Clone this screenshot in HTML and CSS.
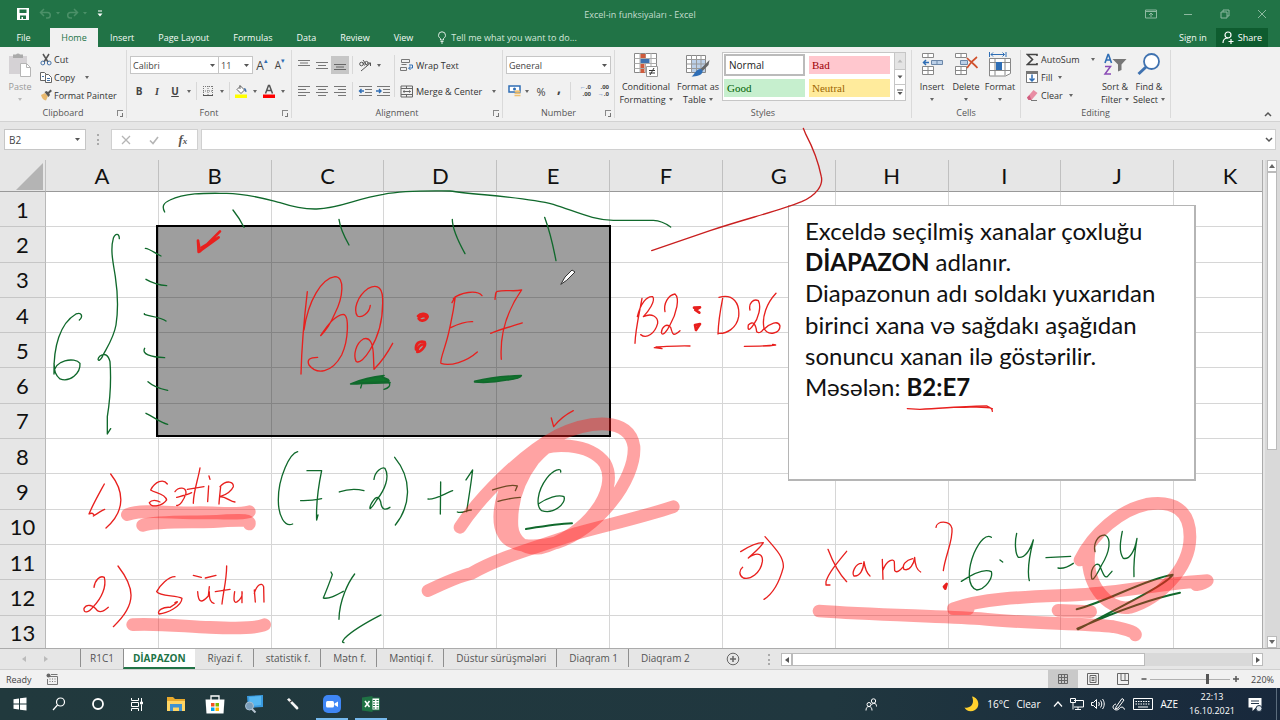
FILE: index.html
```html
<!DOCTYPE html>
<html lang="az">
<head>
<meta charset="utf-8">
<title>Excel-in funksiyaları - Excel</title>
<link rel="stylesheet" href="styles.css">
</head>
<body>
<div class="app">
  <header class="titlebar">
    <div class="quick">
      <button class="qbtn" aria-label="Save"><svg width="14" height="14" viewBox="0 0 14 14"><path d="M1 1h12v12H1z" fill="#fff"/><path d="M3.500 2.500h7v3.500h-7zM4 8.500h6v3.500H7V10H5.500v2H4z" fill="#217346"/></svg></button>
      <button class="qbtn dim" aria-label="Undo"><svg width="22" height="12" viewBox="0 0 22 12"><path d="M5 1L1.500 4.500 5 8M2 4.500h6.500a2.800 2.800 0 010 5.600H7" fill="none" stroke="currentColor" stroke-width="1.500"/><path d="M17 4h4l-2 2.500z" fill="currentColor"/></svg></button>
      <button class="qbtn dim" aria-label="Redo"><svg width="22" height="12" viewBox="0 0 22 12"><path d="M8 1l3.500 3.500L8 8M11 4.500H4.500a2.800 2.800 0 000 5.600H6" fill="none" stroke="currentColor" stroke-width="1.500"/><path d="M17 4h4l-2 2.500z" fill="currentColor"/></svg></button>
      <button class="qbtn" aria-label="Customize"><svg width="6" height="8" viewBox="0 0 6 8"><path d="M1 1h4" stroke="#fff"/><path d="M0.500 3.500h5L3 6.500z" fill="#fff"/></svg></button>
    </div>
    <h1 class="doc-title">Excel-in funksiyaları - Excel</h1>
    <div class="window-btns">
      <button class="wbtn" aria-label="Ribbon options"><svg width="12" height="10" viewBox="0 0 12 10" fill="none" stroke="currentColor"><path d="M.5 1h11v8H.5zM.5 2.500h11M6 8V4.500M4 6l2-2 2 2"/></svg></button>
      <button class="wbtn" aria-label="Minimize"><svg width="10" height="10" viewBox="0 0 10 10" stroke="currentColor"><path d="M1 5.500h8"/></svg></button>
      <button class="wbtn" aria-label="Restore"><svg width="10" height="10" viewBox="0 0 10 10" fill="none" stroke="currentColor"><path d="M1 3h6v6H1zM3 3V1h6v6H7"/></svg></button>
      <button class="wbtn" aria-label="Close"><svg width="10" height="10" viewBox="0 0 10 10" stroke="currentColor"><path d="M1 1l8 8M9 1l-8 8"/></svg></button>
    </div>
  </header>

  <nav class="tabs">
    <button class="tab file">File</button>
    <button class="tab active">Home</button>
    <button class="tab">Insert</button>
    <button class="tab">Page Layout</button>
    <button class="tab">Formulas</button>
    <button class="tab">Data</button>
    <button class="tab">Review</button>
    <button class="tab">View</button>
    <button class="tab tell"><svg width="10" height="13" viewBox="0 0 10 13" fill="none" stroke="#dcebe2"><path d="M3.500 9V7.500C2 6.500 1.500 5.500 1.500 4.300a3.500 3.500 0 017 0C8.500 5.500 8 6.500 6.500 7.500V9zM3.500 10.500h3M4 12h2"/></svg>Tell me what you want to do...</button>
    <span class="grow"></span>
    <button class="tab signin">Sign in</button>
    <button class="tab share"><svg width="12" height="13" viewBox="0 0 12 13" fill="none" stroke="#fff" stroke-width="1.200"><circle cx="6" cy="4" r="3"/><path d="M1 12c0-3 2-5 5-5M9 8v5M6.500 10.500h5"/></svg>Share</button>
  </nav>

  <section class="ribbon">
    <div class="group g-clip">
      <div class="body">
        <button class="big paste"><svg width="24" height="26" viewBox="0 0 24 26"><path d="M1 4h18v18H1z" fill="#d5d2d5"/><path d="M5 2.500h3a2.500 2.500 0 014 0h3V6H5z" fill="#aaa"/><path d="M12.500 11.500h6l4 4v9h-10z" fill="#fff" stroke="#b5b5b5"/><path d="M18.500 11.500v4h4" fill="none" stroke="#b5b5b5"/></svg><span>Paste</span><i class="dd"></i></button>
        <div class="list">
          <button class="cmd"><svg width="12" height="13" viewBox="0 0 12 13" fill="none"><path d="M3 1l5 8M9 1L4 9" stroke="#555" stroke-width="1.500"/><circle cx="2.800" cy="10" r="1.900" stroke="#4472a8"/><circle cx="9.200" cy="10" r="1.900" stroke="#4472a8"/></svg>Cut</button>
          <button class="cmd"><svg width="12" height="12" viewBox="0 0 12 12" fill="#fff" stroke="#666"><path d="M.5 1.500h4l2 2v6h-6z"/><path d="M5.500 3.500h3l3 3v5h-6z"/><path d="M7 7.500h3M7 9.500h3M2 5.500h2" stroke="#4472a8"/></svg>Copy<i class="dd far"></i></button>
          <button class="cmd"><svg width="12" height="12" viewBox="0 0 12 12"><path d="M1 6l4-2 3 3-2 4.500C3.500 11.500 2 9 1 6z" fill="#e9b96e"/><path d="M4.500 3l2-1 1.500 1L10.500.5 12 2 9.300 4.500l.7 1.500-1.500 2z" fill="#555"/></svg>Format Painter</button>
        </div>
      </div>
      <div class="caption">Clipboard<button class="launch" aria-label="Clipboard settings"></button></div>
    </div>

    <div class="group g-font">
      <div class="body rows">
        <div class="row">
          <div class="pair"><select class="sel name" aria-label="Font"><option>Calibri</option></select><select class="sel size" aria-label="Font size"><option>11</option></select></div>
          <button class="ico grow-a" aria-label="Increase font">A<sup>▴</sup></button><button class="ico shrink-a" aria-label="Decrease font">A<sup>▾</sup></button>
        </div>
        <div class="row r2">
          <button class="ico fmt"><b>B</b></button><button class="ico fmt"><em>I</em></button><button class="ico fmt"><u>U</u></button><i class="dd"></i>
          <i class="vr"></i>
          <button class="ico" aria-label="Borders"><svg width="12" height="12" viewBox="0 0 12 12" fill="none" stroke="#777"><path d="M1.500 1v10M6 1v10M10.500 1v10M1 1.500h10M1 6h10" stroke-dasharray="1 1"/><path d="M1 10.500h10" stroke="#555"/></svg></button><i class="dd"></i>
          <i class="vr"></i>
          <button class="ico" aria-label="Fill colour"><svg width="14" height="14" viewBox="0 0 14 14"><path d="M3 5.500L6.500 2l4 4L7 9.500z" fill="#fff" stroke="#666"/><path d="M6 1v4" stroke="#666"/><path d="M10 4c2 0 2.500 2 2.500 4-2 0-2-1.500-2.500-4z" fill="#4472a8"/><path d="M1 10.500h12V14H1z" fill="#ff0"/></svg></button><i class="dd"></i>
          <button class="ico" aria-label="Font colour"><svg width="14" height="14" viewBox="0 0 14 14"><path d="M3.500 9.500L6.500 1.500h1L10.500 9.500M4.700 6.500h4.600" fill="none" stroke="#555" stroke-width="1.500"/><path d="M1 10.500h12V14H1z" fill="#f00"/></svg></button><i class="dd"></i>
        </div>
      </div>
      <div class="caption">Font<button class="launch" aria-label="Font settings"></button></div>
    </div>

    <div class="group g-align">
      <div class="body cols">
        <div class="rows">
          <div class="row">
            <button class="ico w18" aria-label="Top align"><svg width="12" height="12" viewBox="0 0 12 12" stroke="#777"><path d="M0 1.500h12M2 4h8M0 6.500h12"/></svg></button><button class="ico w18" aria-label="Middle align"><svg width="12" height="12" viewBox="0 0 12 12" stroke="#777"><path d="M0 3.500h12M2 6.500h8M0 9.500h12"/></svg></button><button class="ico w18 on" aria-label="Bottom align"><svg width="12" height="12" viewBox="0 0 12 12" stroke="#666"><path d="M0 5.500h12M2 8h8M0 10.500h12"/></svg></button>
            <i class="vr"></i>
            <button class="ico w18" aria-label="Orientation"><svg width="14" height="13" viewBox="0 0 14 13" fill="none" stroke="#555"><circle cx="3.500" cy="5" r="1.800"/><path d="M4.500 3l2 3.500M5 1l4 5.500"/><circle cx="8.500" cy="4" r="1.600"/><path d="M3 12L12.500 4M12.500 7V4h-3"/></svg></button><i class="dd"></i>
          </div>
          <div class="row r2">
            <button class="ico w18" aria-label="Align left"><svg width="12" height="12" viewBox="0 0 12 12" stroke="#777"><path d="M0 1.500h12M0 4.500h8M0 7.500h12M0 10.500h8"/></svg></button><button class="ico w18" aria-label="Centre"><svg width="12" height="12" viewBox="0 0 12 12" stroke="#777"><path d="M0 1.500h12M2 4.500h8M0 7.500h12M2 10.500h8"/></svg></button><button class="ico w18" aria-label="Align right"><svg width="12" height="12" viewBox="0 0 12 12" stroke="#777"><path d="M0 1.500h12M4 4.500h8M0 7.500h12M4 10.500h8"/></svg></button>
            <i class="vr"></i>
            <button class="ico w18" aria-label="Decrease indent"><svg width="14" height="12" viewBox="0 0 14 12" stroke="#777"><path d="M1 1.500h13M7 4.500h7M7 7.500h7M1 10.500h13"/><path d="M6 6H1.500M3.500 4l-2 2 2 2" fill="none" stroke="#2f6eb5" stroke-width="1.400"/></svg></button><button class="ico w18" aria-label="Increase indent"><svg width="14" height="12" viewBox="0 0 14 12" stroke="#777"><path d="M1 1.500h13M7 4.500h7M7 7.500h7M1 10.500h13"/><path d="M0 6h5M3 4l2 2-2 2" fill="none" stroke="#2f6eb5" stroke-width="1.400"/></svg></button>
          </div>
        </div>
        <i class="vr tall"></i>
        <div class="rows">
          <div class="row"><button class="cmd"><svg width="14" height="13" viewBox="0 0 14 13" fill="none" stroke="#777"><path d="M1.500.5h8v3h-8zM1.500 5.500h5M.5 8.500h6v3h-6z"/><path d="M9 6h3.500V9H9M10.500 7.200L8.500 9l2 2" stroke="#2f6eb5"/></svg>Wrap Text</button></div>
          <div class="row r2"><button class="cmd"><svg width="14" height="13" viewBox="0 0 14 13" fill="none" stroke="#666"><path d="M1 1h11.500v11H1zM1 3.500h11.500M1 9.500h11.500M6.500 1v2.500M6.500 9.500V12"/><path d="M3 6.500h7.500M4.500 5.500L3 6.500l1.500 1M9 5.500l1.500 1L9 7.500"/></svg>Merge &amp; Center<i class="dd far"></i></button></div>
        </div>
      </div>
      <div class="caption">Alignment<button class="launch" aria-label="Alignment settings"></button></div>
    </div>

    <div class="group g-num">
      <div class="body rows">
        <div class="row"><select class="sel general" aria-label="Number format"><option>General</option></select></div>
        <div class="row r2">
          <button class="ico" aria-label="Currency"><svg width="14" height="13" viewBox="0 0 14 13"><path d="M1 1h11v6H1z" fill="#fff" stroke="#2f6eb5" stroke-width="1.500"/><circle cx="6.500" cy="4" r="1.500" fill="#2f6eb5"/><ellipse cx="9.500" cy="6.500" rx="3" ry="1.300" fill="#f0c070"/><path d="M6.500 8h6v1.300h-6zM6.500 10h6v1.300h-6z" fill="#f0c070"/></svg></button><i class="dd"></i>
          <button class="ico pct" aria-label="Percent">%</button><button class="ico comma" aria-label="Comma">,</button>
          <i class="vr"></i>
          <button class="ico dec" aria-label="Increase decimal"><span><i>←</i>.0</span><span>.00</span></button><button class="ico dec" aria-label="Decrease decimal"><span>.00</span><span><i>→</i>.0</span></button>
        </div>
      </div>
      <div class="caption">Number<button class="launch" aria-label="Number settings"></button></div>
    </div>

    <div class="group g-style">
      <div class="body cols">
        <button class="big w58"><svg width="24" height="26" viewBox="0 0 24 26"><path d="M.5 1.500h22v19H.5z" fill="#fff" stroke="#888"/><path d="M.5 6.500h22M.5 11.500h22M.5 16.500h22M6 1v20M11.500 1v20M17 1v20" stroke="#aaa"/><path d="M6.500 2h5v4h-5zM6.500 17h4v4h-4z" fill="#cf5b3c"/><path d="M6.500 12h4v4h-4z" fill="#cf5b3c"/><path d="M6.500 7h9v4h-9z" fill="#3f72b0"/><path d="M12.500 14.500h11v10h-11z" fill="#fff" stroke="#999"/><path d="M15 18.500h6M15 21h6M20 16l-4 7" stroke="#333"/></svg><span>Conditional</span><span>Formatting<i class="dd"></i></span></button>
        <button class="big w46"><svg width="24" height="26" viewBox="0 0 24 26"><path d="M.5 3.500h19v17H.5z" fill="#fff" stroke="#888"/><path d="M5 8h14v12H5z" fill="#bcd0e8"/><path d="M.5 7.500h19M.5 12h19M.5 16.500h19M5.500 3v18M10.500 3v18M15 3v18" stroke="#999"/><path d="M23.500 8l-1 5-6 6-2-2z" fill="#666"/><path d="M14 17c2 0 3 1.500 2.500 3-1 3.500-6 4.500-11 4.500 3-1.500 4-7 8.500-7.500z" fill="#2f6eb5"/></svg><span>Format as</span><span>Table<i class="dd"></i></span></button>
        <div class="gallery">
          <div class="swatches">
            <button class="st normal">Normal</button><button class="st bad">Bad</button>
            <button class="st good">Good</button><button class="st neutral">Neutral</button>
          </div>
          <div class="gal-btns"><button aria-label="Up" class="off"><svg width="6" height="4" viewBox="0 0 6 4"><path d="M.5 3.500h5L3 .5z" fill="#bbb"/></svg></button><button aria-label="Down"><svg width="6" height="4" viewBox="0 0 6 4"><path d="M.5.5h5L3 3.500z" fill="#555"/></svg></button><button aria-label="More"><svg width="6" height="7" viewBox="0 0 6 7"><path d="M0 1h6" stroke="#555"/><path d="M.5 3h5L3 6z" fill="#555"/></svg></button></div>
        </div>
      </div>
      <div class="caption">Styles</div>
    </div>

    <div class="group g-cells">
      <div class="body cols">
        <button class="big w34"><svg width="24" height="26" viewBox="0 0 24 26" fill="#fff" stroke="#888"><path d="M2.500 1.500h11v4h-11zM8 1.500v4M2.500 14.500h11v8h-11zM8 14.500v8M2.500 18.500h11"/><path d="M11.500 8.500h11v4h-11zM17 8.500v4" fill="#bcd0e8" stroke="#6b87a8"/><path d="M9 10.500H3.500M6 8l-2.500 2.500L6 13" fill="none" stroke="#2f6eb5" stroke-width="1.500"/></svg><span>Insert</span><i class="dd"></i></button>
        <button class="big w34"><svg width="24" height="26" viewBox="0 0 24 26" fill="#fff" stroke="#888"><path d="M1.500 1.500h11v4h-11zM7 1.500v4M1.500 14.500h11v8h-11zM7 14.500v8M1.500 18.500h11"/><path d="M6.500 8.500h7v4h-7z" fill="#bcd0e8" stroke="#6b87a8"/><path d="M13 6c4 4 7 6 10.500 10M23 5c-4 3-7 6-10 11" fill="none" stroke="#d0502c" stroke-width="1.700"/></svg><span>Delete</span><i class="dd"></i></button>
        <button class="big w34"><svg width="24" height="26" viewBox="0 0 24 26" fill="#fff" stroke="#888"><path d="M1.500 6.500h21v15l-5 2.500H1.500z"/><path d="M1.500 10.500h21M1.500 18.500h21M7 6.500v17M17 6.500v17"/><path d="M8 10h6v8H8z" fill="#2f6eb5" stroke="none"/><path d="M1.500 0v5M18 0v5M3 2.500h13.500M5 .5l-2 2 2 2M14.500.5l2 2-2 2" fill="none" stroke="#2f6eb5"/></svg><span>Format</span><i class="dd"></i></button>
      </div>
      <div class="caption">Cells</div>
    </div>

    <div class="group g-edit">
      <div class="body cols">
        <div class="list edit">
          <button class="cmd"><svg width="12" height="13" viewBox="0 0 12 13" fill="none" stroke="#444" stroke-width="1.600"><path d="M11 3V1.500H1.500L6.500 6.500l-5 5H11V10"/></svg>AutoSum<i class="dd far"></i></button>
          <button class="cmd"><svg width="12" height="12" viewBox="0 0 12 12" fill="#fff"><path d="M.5 1.500h11v10H.5z" stroke="#777"/><path d="M0 0h12v3H0z" fill="#777"/><path d="M6 3.500V10M3.500 7.500L6 10l2.500-2.500" fill="none" stroke="#2f6eb5" stroke-width="1.500"/></svg>Fill<i class="dd"></i></button>
          <button class="cmd"><svg width="12" height="12" viewBox="0 0 12 12"><path d="M1 8.500L7.500 1l4 3-6 7H2.500z" fill="#e88da4"/><path d="M1 8.500l1.500 2.500h3L3.500 6z" fill="#d05f80"/><path d="M5 11.500h6" stroke="#777"/></svg>Clear<i class="dd"></i></button>
        </div>
        <button class="big w34"><svg width="24" height="26" viewBox="0 0 24 26" fill="none"><path d="M2 11L5 2.500h.5L8.500 11M3 8h4.500" stroke="#2f6eb5" stroke-width="1.600"/><path d="M2 14.500h5.500L2 22h6" stroke="#8a4bb5" stroke-width="1.500"/><path d="M9.500 7h14l-5 5.500V18l-3.500 1.500v-7z" fill="#777"/></svg><span>Sort &amp;</span><span>Filter<i class="dd"></i></span></button>
        <button class="big w34"><svg width="24" height="26" viewBox="0 0 24 26" fill="none"><circle cx="14.500" cy="9.500" r="7.500" fill="#fff" stroke="#3f72b0" stroke-width="1.800"/><path d="M9 15L1.500 22" stroke="#3f72b0" stroke-width="3"/></svg><span>Find &amp;</span><span>Select<i class="dd"></i></span></button>
      </div>
      <div class="caption">Editing</div>
    </div>
    <button class="collapse" aria-label="Collapse ribbon"><svg width="8" height="6" viewBox="0 0 8 6" fill="none" stroke="#555" stroke-width="1.500"><path d="M1 5l3-3 3 3"/></svg></button>
  </section>

  <section class="formula">
    <select class="sel cellname" aria-label="Name box"><option>B2</option></select>
    <i class="dots"></i>
    <div class="fx">
      <button aria-label="Cancel"><svg width="10" height="10" viewBox="0 0 10 10" stroke="#b5b5b5" stroke-width="1.300"><path d="M1 1l8 8M9 1L1 9"/></svg></button>
      <button aria-label="Enter"><svg width="10" height="10" viewBox="0 0 10 10" fill="none" stroke="#b5b5b5" stroke-width="1.600"><path d="M1 5.500L4 8.500 9 2"/></svg></button>
      <button class="fxb" aria-label="Insert function"><em>f<small>x</small></em></button>
    </div>
    <div class="fbox"><input type="text" aria-label="Formula"><svg width="8" height="6" viewBox="0 0 8 6" fill="none" stroke="#555" stroke-width="1.500"><path d="M1 1l3 3 3-3"/></svg></div>
  </section>

  <main class="sheet">
    <div class="grid-wrap">
      <table class="cells">
        <thead><tr><th class="corner"><svg width="27" height="27" viewBox="0 0 27 27"><path d="M27 0v27H0z" fill="#b4b4b4"/></svg></th><th>A</th><th>B</th><th>C</th><th>D</th><th>E</th><th>F</th><th>G</th><th>H</th><th>I</th><th>J</th><th>K</th></tr></thead>
        <tbody>
          <tr><th>1</th><td></td><td></td><td></td><td></td><td></td><td></td><td></td><td></td><td></td><td></td><td></td></tr>
          <tr><th>2</th><td></td><td></td><td></td><td></td><td></td><td></td><td></td><td></td><td></td><td></td><td></td></tr>
          <tr><th>3</th><td></td><td></td><td></td><td></td><td></td><td></td><td></td><td></td><td></td><td></td><td></td></tr>
          <tr><th>4</th><td></td><td></td><td></td><td></td><td></td><td></td><td></td><td></td><td></td><td></td><td></td></tr>
          <tr><th>5</th><td></td><td></td><td></td><td></td><td></td><td></td><td></td><td></td><td></td><td></td><td></td></tr>
          <tr><th>6</th><td></td><td></td><td></td><td></td><td></td><td></td><td></td><td></td><td></td><td></td><td></td></tr>
          <tr><th>7</th><td></td><td></td><td></td><td></td><td></td><td></td><td></td><td></td><td></td><td></td><td></td></tr>
          <tr><th>8</th><td></td><td></td><td></td><td></td><td></td><td></td><td></td><td></td><td></td><td></td><td></td></tr>
          <tr><th>9</th><td></td><td></td><td></td><td></td><td></td><td></td><td></td><td></td><td></td><td></td><td></td></tr>
          <tr><th>10</th><td></td><td></td><td></td><td></td><td></td><td></td><td></td><td></td><td></td><td></td><td></td></tr>
          <tr><th>11</th><td></td><td></td><td></td><td></td><td></td><td></td><td></td><td></td><td></td><td></td><td></td></tr>
          <tr><th>12</th><td></td><td></td><td></td><td></td><td></td><td></td><td></td><td></td><td></td><td></td><td></td></tr>
          <tr><th>13</th><td></td><td></td><td></td><td></td><td></td><td></td><td></td><td></td><td></td><td></td><td></td></tr>
        </tbody>
      </table>
      <div class="selection"></div>
      <div class="note">
        <p>Exceldə seçilmiş xanalar çoxluğu<br><b>DİAPAZON</b> adlanır.</p>
        <p>Diapazonun adı soldakı yuxarıdan<br>birinci xana və sağdakı aşağıdan<br>sonuncu xanan ilə göstərilir.</p>
        <p>Məsələn: <b>B2:E7</b></p>
      </div>
    </div>
    <div class="vscroll">
      <button aria-label="Scroll up"><svg width="6" height="4" viewBox="0 0 6 4"><path d="M0 4h6L3 0z" fill="#666"/></svg></button>
      <div class="vthumb"></div>
      <span class="grow"></span>
      <button aria-label="Scroll down"><svg width="6" height="4" viewBox="0 0 6 4"><path d="M0 0h6L3 4z" fill="#666"/></svg></button>
    </div>
  </main>

  <section class="sheettabs">
    <div class="navs"><button aria-label="Previous sheet"><svg width="4" height="6" viewBox="0 0 4 6"><path d="M4 0v6L0 3z" fill="#bbb"/></svg></button><button aria-label="Next sheet"><svg width="4" height="6" viewBox="0 0 4 6"><path d="M0 0v6l4-3z" fill="#bbb"/></svg></button></div>
    <button class="stab first">R1C1</button><button class="stab cur">DİAPAZON</button><button class="stab">Riyazi f.</button><button class="stab">statistik f.</button><button class="stab">Mətn f.</button><button class="stab">Məntiqi f.</button><button class="stab">Düstur sürüşmələri</button><button class="stab">Diaqram 1</button><button class="stab">Diaqram 2</button>
    <button class="add" aria-label="New sheet"><svg width="14" height="14" viewBox="0 0 14 14" fill="none" stroke="#666"><circle cx="7" cy="7" r="5.800"/><path d="M7 4v6M4 7h6" stroke-width="1.500"/></svg></button>
    <span class="grow"></span>
    <div class="hzone"><i class="dots"></i>
      <div class="hscroll"><button aria-label="Scroll left"><svg width="4" height="6" viewBox="0 0 4 6"><path d="M4 0v6L0 3z" fill="#555"/></svg></button><div class="hthumb"></div><button aria-label="Scroll right"><svg width="4" height="6" viewBox="0 0 4 6"><path d="M0 0v6l4-3z" fill="#555"/></svg></button></div>
    </div>
  </section>

  <section class="status">
    <span class="ready">Ready</span>
    <svg width="12" height="12" viewBox="0 0 12 12" fill="none" stroke="#777"><path d="M4 3.500h7.500v8H1.500V6M3.500 6h1M6 6h1M8.500 6h1M3.500 8.500h1M6 8.500h1M8.500 8.500h1M5 1.500h6.500"/><circle cx="2.500" cy="2.500" r="2" fill="#666" stroke="none"/></svg>
    <span class="grow"></span>
    <button class="view on" aria-label="Normal view"><svg width="12" height="12" viewBox="0 0 12 12" fill="none" stroke="#666"><path d="M1.500 1.500h9v9h-9zM4.500 1.500v9M7.500 1.500v9M1.500 4.500h9M1.500 7.500h9"/></svg></button><button class="view" aria-label="Page layout view"><svg width="12" height="12" viewBox="0 0 12 12" fill="none" stroke="#666"><path d="M.5.5h11v11H.5zM3 2.500h6v7H3zM4.500 4.500h3M4.500 6h3M4.500 7.500h3"/></svg></button><button class="view" aria-label="Page break view"><svg width="12" height="12" viewBox="0 0 12 12" fill="none" stroke="#666"><path d="M.5.5h11v11H.5zM4 .5v7M8 .5v7M4 7.500h7.500"/></svg></button>
    <button class="zb" aria-label="Zoom out"><svg width="6" height="6" viewBox="0 0 6 6"><path d="M.5 3h5" stroke="#555" stroke-width="1.500"/></svg></button><input class="zoom" type="range" min="0" max="100" value="72" aria-label="Zoom"><button class="zb" aria-label="Zoom in"><svg width="6" height="6" viewBox="0 0 6 6"><path d="M0 3h6M3 0v6" stroke="#555" stroke-width="1.500"/></svg></button>
    <span class="pc">220%</span>
  </section>

  <footer class="taskbar">
    <button class="tk" aria-label="Start"><svg width="14" height="14" viewBox="0 0 14 14" fill="#fff"><path d="M.5 2.300L6 1.500v5H.5zM7 1.300L13.500.5v6H7zM.5 7.500H6v5l-5.500-.8zM7 7.500h6.500v6L7 12.700z"/></svg></button>
    <button class="tk" aria-label="Search"><svg width="14" height="14" viewBox="0 0 14 14" fill="none" stroke="#fff" stroke-width="1.200"><circle cx="8.500" cy="5" r="4"/><path d="M5.500 8L1 13"/></svg></button>
    <button class="tk" aria-label="Cortana"><svg width="14" height="14" viewBox="0 0 14 14" fill="none" stroke="#fff" stroke-width="1.800"><circle cx="7" cy="7" r="5"/></svg></button>
    <button class="tk" aria-label="Task view"><svg width="14" height="14" viewBox="0 0 14 14" fill="none" stroke="#fff"><path d="M1.500 1v2.500h7V1M1.500 5.500h7v4h-7zM1.500 14v-2.500h7V14M11.500 1v4M11.500 7.500V14"/><path d="M10.500 5h2v2h-2z" fill="#fff"/></svg></button>
    <button class="tk" aria-label="Explorer"><svg width="18" height="16" viewBox="0 0 18 16"><path d="M0 1h6l2 2h10v12H0z" fill="#e8a92c"/><path d="M0 5h18v10H0z" fill="#ffd564"/><path d="M3 8h12v7h-3v-3.500H6V15H3z" fill="#3f92d2"/></svg></button>
    <button class="tk" aria-label="Store"><svg width="20" height="20" viewBox="0 0 20 20"><path d="M6 6V2h8v4" fill="none" stroke="#fff" stroke-width="1.300"/><path d="M.5 5.500h19l-1 14h-17z" fill="#fff"/><path d="M6 9h3.500v3.500H6z" fill="#f25022"/><path d="M10.500 9H14v3.500h-3.500z" fill="#7fba00"/><path d="M6 13.500h3.500V17H6z" fill="#00a4ef"/><path d="M10.500 13.500H14V17h-3.500z" fill="#ffb900"/></svg></button>
    <button class="tk" aria-label="Screen tool"><svg width="20" height="18" viewBox="0 0 20 18"><path d="M3 1l16-1v12L4 13z" fill="#3a9be0"/><path d="M5 2l12-1v9L6 11z" fill="#56b8f2"/><circle cx="5.500" cy="11" r="4" fill="#7b9db8" stroke="#a8bfd0"/><path d="M8 14l3.500 3.500" stroke="#b8c6d2" stroke-width="2"/></svg></button>
    <button class="tk" aria-label="Pen"><svg width="14" height="14" viewBox="0 0 14 14"><path d="M1 2.500L3 1l9 9c1 1.500 0 3-1.500 2.500z" fill="#f4f4f4"/><path d="M3.500 5.500L6 3.500" stroke="#333" stroke-width="1.200"/></svg></button>
    <button class="tk open" aria-label="Zoom"><svg width="18" height="18" viewBox="0 0 18 18"><rect width="18" height="18" rx="5" fill="#3f86f5"/><rect x="3" y="6" width="8" height="6.500" rx="1.500" fill="#fff"/><path d="M11.500 8.500L15 6.500v5.500l-3.500-2z" fill="#fff"/></svg></button>
    <button class="tk open" aria-label="Excel"><svg width="18" height="16" viewBox="0 0 18 16"><path d="M9 2h8.500v12H9z" fill="#fff" stroke="#217346"/><path d="M11 4.500h2M14.500 4.500h2M11 7h2M14.500 7h2M11 9.500h2M14.500 9.500h2M11 12h2M14.500 12h2" stroke="#217346"/><path d="M0 1.500L10.500 0v16L0 14.500z" fill="#1f7244"/><path d="M3 5l4.500 6M7.500 5L3 11" stroke="#fff" stroke-width="1.500"/></svg></button>
    <span class="grow"></span>
    <div class="people"><svg width="12" height="13" viewBox="0 0 12 13" fill="none" stroke="#fff"><circle cx="8.500" cy="3" r="2.200"/><circle cx="4" cy="6.500" r="2"/><path d="M1 12.500C1 10 2 8.500 4 8.500s3 1.500 3 4M6.500 7C7 5.700 8 5.300 9 5.300c1.700 0 2.500 1.200 2.500 3.200"/></svg></div>
    <div class="weather"><svg width="16" height="16" viewBox="0 0 16 16"><path d="M8 0.500c7 1 8.500 10.500 3 13.500-4 2.500-9 1-10.500-2.500C7 13 11 7 8 .5z" fill="#ffd02e"/></svg><span>16°C</span><span>Clear</span></div>
    <div class="tray">
      <svg width="10" height="8" viewBox="0 0 10 8" fill="none" stroke="#fff" stroke-width="1.200"><path d="M1 6.500L5 2l4 4.500"/></svg>
      <svg width="14" height="12" viewBox="0 0 14 12" fill="none" stroke="#fff"><path d="M4 2.500h9.500v6.500H4M5 11.500h6M8 9v2.500M.5.500h5v4h-5zM3 4.500v7"/></svg>
      <svg width="14" height="12" viewBox="0 0 14 12" fill="none" stroke="#fff"><path d="M.5 4.500h2l3-3v9l-3-3h-2zM7.500 4c1 1 1 3 0 4M9.500 2.500c1.700 2 1.700 5 0 7M11.500 1c2.300 3 2.300 7 0 10"/></svg>
      <svg width="14" height="14" viewBox="0 0 14 14" fill="none" stroke="#fff"><path d="M4 10L10 1.500l2 1.500-6 8-2.500 1zM4 7C0 8 0 12 4 13c3 .5 3.500-3 6-3s1 3 3 2"/></svg>
      <svg width="20" height="12" viewBox="0 0 20 12" fill="none" stroke="#fff"><path d="M.5.5h19v11H.5z"/><path d="M2.500 3.500h15M2.500 6h15" stroke-dasharray="1.500 1"/><path d="M5 9h10"/></svg>
      <span>AZE</span>
    </div>
    <div class="clock"><time>22:13</time><time>16.10.2021</time></div>
    <button class="notif" aria-label="Notifications"><svg width="14" height="15" viewBox="0 0 14 15"><path d="M.5 1h13v9.500H8L4.500 14v-3.500h-4z" fill="#fff"/><path d="M3 4h8M3 6.500h8" stroke="#24364a"/><circle cx="11" cy="11.500" r="3" fill="#dce3ea" stroke="#24364a"/></svg></button>
    <i class="peek"></i>
  </footer>

  <svg class="ink" width="1280" height="720" viewBox="0 0 1280 720" aria-hidden="true">
    <g class="pen-red">
      <g transform="translate(0 160) scale(.3333)">
        <path class="fat" d="M660 214L600 274L594 242L596 276L656 232L606 262"/>
      </g>
      <g transform="translate(290 180) scale(.3333)">
        <path d="M52 335C42 420 35 500 33 582M42 450C55 360 95 296 135 290C165 290 160 350 135 400C120 435 105 455 92 467C115 430 140 405 160 403C178 405 176 480 155 525C125 580 80 585 57 555C50 540 58 532 83 532"/>
        <path d="M241 376C238 400 215 415 202 408C190 390 200 350 235 325C265 310 280 325 278 370C278 430 262 475 240 510C225 535 208 552 198 544C190 525 197 490 220 477C240 470 248 490 250 520L252 568C272 548 292 520 308 490"/>
        <path class="fat" d="M384 408C392 398 412 400 413 410C408 422 392 426 386 416C392 408 404 406 408 411M378 508C376 490 388 482 404 486C410 498 392 516 382 516C382 502 392 494 400 492"/>
        <path d="M486 368L496 350C490 400 482 430 478 450C468 500 448 540 453 550C480 560 530 545 562 516M490 356C510 338 560 328 576 347M482 443C505 432 525 424 548 425M615 358C617 340 617 335 622 334C650 328 670 336 695 330C660 380 628 450 634 538M602 460C635 445 665 440 697 429"/>
        <path d="M784 714L791 740C805 722 825 705 850 692"/>
      </g>
      <g transform="translate(620 130) scale(.3333)">
        <path class="dark" d="M550 -5L558 14C585 65 597 105 604 140C610 165 590 195 545 215C470 245 380 265 270 302L95 362"/>
        <path d="M66 505C58 550 46 600 45 640M52 560C62 520 80 498 98 500C108 512 85 545 70 560C95 548 115 560 113 580C105 610 80 628 62 614M135 545C130 520 145 495 165 492C180 505 170 550 150 585C140 605 128 620 124 608C126 590 140 578 152 592C158 615 160 620 180 602"/>
        <path class="fat" d="M222 533L240 532L226 540L238 548M225 585L240 582L228 600Z"/>
        <path d="M308 505C300 545 295 580 294 612M297 502C340 490 360 520 356 560C350 595 320 612 294 610M390 540C385 520 400 505 415 512C425 530 415 565 400 585C390 600 382 605 385 585C400 570 408 585 410 605C418 612 425 605 430 598M468 490C440 520 425 560 432 595C445 620 480 610 480 588C475 570 450 580 432 598"/>
        <path d="M103 653L126 656L108 651C140 650 180 646 210 648M373 649C410 649 440 649 467 645L458 643"/>
        <path d="M862 836L900 838C980 834 1050 828 1100 828C1115 834 1118 838 1117 844M1117 836C1100 828 1060 832 1020 832"/>
      </g>
      <g transform="translate(60 440) scale(.3333)">
        <path d="M133 132C115 165 98 195 87 222C100 215 105 228 100 228C115 218 125 212 134 208M152 102C190 150 200 210 138 264"/>
        <path d="M322 132C310 115 285 125 272 150C285 160 315 160 320 180C308 198 275 205 268 188C275 178 290 180 300 186M345 155C355 140 380 140 378 160C372 180 358 200 350 196M350 172C365 168 380 165 395 158M420 84C414 120 400 155 400 190M382 148L432 140M446 138L443 185M450 118L447 108M482 140C480 160 478 175 477 192M480 140C500 118 522 125 520 140C512 158 495 165 480 170C500 170 510 185 525 186"/>
        <path d="M102 442C105 420 120 405 133 412C140 440 125 475 100 500C85 520 70 520 72 505C80 490 100 495 112 512C125 520 135 510 145 502M174 378C222 440 235 490 160 560"/>
        <path d="M345 410C325 410 300 435 290 455C300 470 350 465 366 475C365 500 320 520 297 522C290 512 310 500 330 502C350 490 360 480 345 488M413 455C415 490 425 490 445 468L448 440M448 455C448 480 452 488 462 490M400 406L424 412M436 414L468 406M500 378C500 420 490 455 486 492M466 455L510 448M524 455C520 480 522 492 532 485C545 475 548 465 546 455L546 488M583 450L586 486M583 460C590 435 605 425 611 440L612 486"/>
      </g>
      <g transform="translate(720 480) scale(.3333)">
        <path d="M62 215C85 200 110 188 130 188C120 205 100 220 85 234C110 215 130 220 127 245C122 280 90 300 70 294C55 285 58 270 68 262M135 170C175 215 192 235 190 262C180 300 160 340 132 358"/>
        <path d="M324 208C340 250 360 285 380 305M380 214C350 250 325 280 318 305L318 315L330 315M425 250C405 250 395 280 402 288C420 290 430 270 432 245C435 265 440 280 450 288M487 238L489 298M489 270C500 240 520 235 523 245L524 272C530 280 540 272 550 260M578 236C558 240 545 255 552 268C570 275 582 250 584 232C585 255 590 270 602 276M648 142C650 122 690 120 696 145C700 180 675 230 670 272"/>
        <path class="fat" d="M672 320L680 312L676 326Z"/>
      </g>
    </g>

    <g class="pen-green">
      <g transform="translate(290 180) scale(.3333)">
        <path d="M-376 96C-386 78 -378 68 -360 60C-310 36 -240 40 -190 40C-130 40 -70 58 -30 68C0 78 40 88 80 87C150 85 200 55 280 43C350 30 430 33 480 33C560 45 700 50 790 73C860 95 910 121 970 121H1090C1115 122 1130 132 1142 141"/>
        <path d="M147 118C150 140 160 165 177 195M487 118C487 145 505 185 525 221M764 112C778 150 790 200 798 242"/>
        <path class="blob" d="M182 612C215 598 250 590 282 587C270 595 295 594 297 602C280 610 220 606 190 612C230 612 270 606 300 608Z"/>
        <path d="M297 606C303 618 295 625 282 628M212 624L215 614"/>
        <path class="blob" d="M554 604C585 596 640 588 694 587C690 596 670 598 650 600C620 606 580 608 554 606Z"/>
      </g>
      <g transform="translate(0 160) scale(.3333)">
        <path d="M699 150C712 166 722 182 732 202M436 265C450 266 465 280 483 288M438 358C455 368 475 375 500 377M433 461C430 468 480 468 498 483M434 565C425 582 450 592 494 593M444 665C455 675 480 686 503 691M438 760C460 770 480 788 503 793"/>
        <path d="M358 236C358 218 345 220 340 235C330 270 340 310 346 350C355 410 355 450 348 495C340 540 315 570 305 594C295 608 290 598 300 588C315 578 325 585 330 605C334 660 330 720 322 770L322 822L332 806"/>
        <path d="M238 480C250 470 245 455 228 462C180 490 160 560 162 642C160 600 225 590 240 610C242 640 210 668 180 657C160 640 165 625 162 610"/>
      </g>
      <g transform="translate(60 440) scale(.3333)">
        <path d="M713 35C690 40 655 110 655 180C655 230 675 262 698 252M741 92L785 92C775 140 768 190 770 240L774 225M722 182C745 180 765 182 785 176M838 156C860 148 885 145 912 152M942 118C945 95 965 80 975 85C990 110 975 150 950 180C935 205 925 215 932 195C945 170 955 165 962 185C965 210 975 212 990 202"/>
        <path d="M813 396L817 404C808 430 800 450 790 474C810 478 830 465 850 454M884 402C866 425 838 480 837 538M852 608C843 608 850 600 855 594C885 565 930 542 963 525"/>
      </g>
      <g transform="translate(390 400) scale(.3333)">
        <path d="M14 172C70 240 60 320 16 375M152 246L151 342M114 297C135 300 165 280 188 272M228 240L248 210C242 260 235 300 230 335M202 336C215 342 230 330 244 330M308 270C330 262 360 252 382 258L376 272M324 304C350 298 370 292 391 292"/>
        <path d="M512 216C515 202 490 208 470 235C440 275 438 320 455 332C490 345 530 310 522 290C505 282 470 295 445 312"/>
        <path class="mid" d="M408 387C440 382 500 372 546 370"/>
      </g>
      <g transform="translate(980 470) scale(.3333)">
        <path d="M34 202C20 192 0 210 -18 250C-38 300 -38 350 -10 360C15 358 40 325 34 305C15 295 -20 310 -56 334M60 270L68 276M110 190C104 215 105 250 115 262C135 265 150 240 160 210C150 250 140 300 148 332M198 263L272 259M234 294C250 298 268 288 280 280"/>
        <path d="M345 245C340 225 350 195 375 195C395 205 390 245 365 285C350 315 338 335 335 325C330 300 345 275 358 285C368 305 372 325 382 320L396 304M427 184C422 210 415 245 430 265C450 270 465 240 471 205C465 240 460 280 462 320"/>
        <path class="mid" d="M290 418C380 395 500 325 578 314C560 345 400 420 294 478M292 476C340 455 470 395 600 368"/>
      </g>
    </g>

    <g class="marker">
      <g transform="translate(60 440) scale(.3333)">
        <path d="M202 224C250 205 350 222 420 218C480 218 540 224 568 215"/>
        <path d="M248 256C300 240 430 250 500 242C550 240 570 240 568 252"/>
        <path d="M218 554C300 550 380 560 450 562C530 566 590 566 614 554"/>
      </g>
      <g transform="translate(390 400) scale(.3333)">
        <path d="M210 382C270 290 400 160 500 108C600 60 720 50 732 140C738 240 620 390 500 428C430 446 360 440 340 400C310 350 345 220 420 165C480 120 600 130 645 190C690 270 590 410 450 444C400 450 370 420 366 380C362 310 385 240 430 180C460 145 480 130 502 130"/>
        <path d="M114 572C170 545 210 528 245 520C330 470 450 440 560 400C670 370 760 350 850 320"/>
      </g>
      <g transform="translate(720 480) scale(.3333)">
        <path d="M297 393C450 404 650 408 780 416C900 430 1100 430 1180 440C1230 450 1250 460 1246 465"/>
        <path d="M745 386H700C800 350 960 350 1080 344C1220 335 1330 310 1462 302C1450 312 1440 312 1428 314"/>
      </g>
      <g transform="translate(980 470) scale(.3333)">
        <path d="M300 270C340 190 420 120 500 103C580 90 630 120 630 200C630 300 530 390 450 412C380 425 310 330 328 240"/>
        <path d="M234 421L332 425"/>
      </g>
    </g>
    <path d="M561 284L565 277L572 270L575 272L567 280Z" fill="#fff" stroke="#333" stroke-width="1"/>
  </svg>
</div>
</body>
</html>
```

FILE: styles.css
```css
* { box-sizing: border-box; }
body { margin: 0; font-family: "Open Sans", "Noto Sans", sans-serif; font-size: 10px; color: #444; }
button, select, input { font: inherit; color: inherit; margin: 0; }
button { border: 0; padding: 0; background: none; display: inline-flex; align-items: center; justify-content: center; white-space: nowrap; }
svg { display: block; flex: none; }
i { font-style: normal; }
.app { position: relative; display: flex; flex-direction: column; height: 100vh; min-height: 480px; overflow: hidden; background: #e6e6e6; }
.grow { flex: 1; }
.dd { flex: none; width: 0; height: 0; border: 2px solid transparent; border-top: 3px solid #666; border-bottom: 0; margin-left: 3px; }
.dd.far { margin-left: 8px; }
.vr { width: 1px; height: 18px; background: #d8d8d8; flex: none; }
.vr.tall { height: 42px; margin-top: 5px; }
.dots { width: 1px; height: 11px; border-left: 2px dotted #aaa; flex: none; }

.titlebar { display: grid; grid-template-columns: 1fr auto 1fr; height: 28px; background: #217346; align-items: center; color: #fff; flex: none; }
.quick { display: flex; align-items: center; gap: 5px; padding-left: 16px; height: 24px; }
.qbtn { min-width: 14px; }
.quick .qbtn:nth-child(2) { margin-left: 4px; }
.dim { color: #4b9068; }
.doc-title { margin: 0; font-size: 9px; font-weight: 400; color: #c4ddcf; }
.window-btns { display: flex; justify-content: flex-end; height: 24px; color: #8db9a0; }
.wbtn { width: 37px; }

.tabs { display: flex; height: 19px; background: #217346; color: #f4faf6; flex: none; font-size: 9px; padding-right: 12px; }
.tab { padding: 0 12px; }
.tab.file { width: 47px; margin-right: 3px; }
.tab.active { background: #f1f1f1; color: #217346; width: 48px; }
.tab.tell { gap: 4px; color: #d4e8dc; }
.tab.share { background: #0e5c2f; gap: 4px; padding: 0 6px; color: #fff; }
.tab.signin { padding: 0 9px; }

.ribbon { position: relative; display: flex; height: 75px; background: #f1f1f1; border-bottom: 1px solid #d2d2d2; font-size: 9px; flex: none; }
.group { position: relative; display: flex; flex-direction: column; border-right: 1px solid #dadada; margin: 3px 0; flex: none; }
.group .body { flex: 1; display: flex; align-items: flex-start; }
.caption { position: relative; height: 10px; line-height: 10px; text-align: center; color: #555; }
.launch { position: absolute; right: 3px; top: 2px; width: 6px; height: 6px; border: 1px solid #888; border-right: 0; border-bottom: 0; }
.launch::after { content: ""; width: 3px; height: 3px; margin: 2px 0 0 2px; border: 1px solid #777; border-top: 0; border-left: 0; }
.g-clip { width: 127px; } .g-font { width: 165px; } .g-align { width: 211px; } .g-num { width: 112px; }
.g-style { width: 297px; } .g-cells { width: 109px; } .g-edit { width: 150px; }
.body.rows, .rows { display: flex; flex-direction: column; align-items: stretch; gap: 5px; }
.row { display: flex; align-items: center; height: 20px; }
.g-font .row, .g-num .row, .g-align .row { margin-top: 1px; }
.group .rows { padding: 4px 0 0 3px; }
.g-align .body { gap: 2px; }
.list { display: flex; flex-direction: column; align-items: flex-start; }
.cmd { height: 18px; gap: 2px; color: #333; }
.big { flex-direction: column; justify-content: flex-start; padding-top: 2px; line-height: 13px; color: #333; }
.big span { display: flex; align-items: center; }
.big > .dd { margin: 5px 0 0; }
.big > svg { margin-bottom: 2px; }
.paste { width: 40px; color: #999; }
.paste .dd { border-top-color: #bbb; }
.w58 { width: 58px; margin-left: 2px; } .w46 { width: 46px; } .w34 { width: 34px; }
.sel { appearance: none; border: 1px solid #c6c6c6; background: #fff url("data:image/svg+xml,%3Csvg xmlns='http://www.w3.org/2000/svg' width='5' height='3'%3E%3Cpath d='M0 0h5L2.500 3z' fill='%23555'/%3E%3C/svg%3E") no-repeat right 3px center / 5px 3px; height: 18px; padding: 0 2px; border-radius: 0; }
.pair { display: flex; }
.sel.name { width: 89px; } .sel.size { width: 35px; margin-left: -1px; }
.ico { min-width: 18px; height: 18px; }
.w18 { width: 18px; }
.ico.on { background: #c6c6c6; }
.grow-a { font-size: 12px; } .shrink-a { font-size: 10px; }
.ico sup { font-size: 7px; color: #2f6eb5; align-self: flex-start; }
.fmt { font-size: 10px; }
.fmt em { font-family: "Liberation Serif", serif; font-weight: 700; }
.fmt u { font-weight: 700; }
.r2 > .dd { margin: 0 3px; }
.r2 > .vr { margin: 0 2px; }
.g-align .vr { margin-left: 3px; margin-right: 3px; }
.g-align .vr.tall { margin: 5px 0 0; }
.sel.general { width: 105px; }
.g-num .r2 .dd { margin: 0 1px; }
.pct { font-size: 11px; margin-left: 2px; } .comma { font-size: 14px; font-weight: 700; padding-bottom: 8px; }
.dec { flex-direction: column; font-size: 6px; line-height: 7px; font-weight: 700; align-items: flex-end; }
.dec i { color: #2f6eb5; }
.gallery { display: flex; height: 49px; border: 1px solid #c6c6c6; background: #fff; margin: 2px 0 0 1px; width: 184px; }
.swatches { flex: 1; display: grid; grid-template-columns: 1fr 1fr; grid-template-rows: 22px 18px; gap: 3px; padding: 1px 4px 0 0; align-items: center; }
.st { justify-content: flex-start; padding-left: 3px; font-size: 10px; height: 18px; margin-left: 1px; }
.normal { border: 2px solid #bbb; color: #222; height: 22px; }
.bad, .good, .neutral { font-family: "Liberation Serif", serif; font-size: 11px; }
.bad { background: #ffc7ce; color: #9c0006; } .good { background: #c6efce; color: #006100; } .neutral { background: #ffeb9c; color: #9c6500; }
.gal-btns { width: 11px; display: grid; grid-template-rows: 1fr 1fr 1fr; border-left: 1px solid #c6c6c6; }
.gal-btns button + button { border-top: 1px solid #c6c6c6; }
.gal-btns .off { background: #e4e4e4; }
.g-cells .body { padding-left: 3px; }
.list.edit { width: 77px; padding-left: 5px; }
.list.edit .cmd { gap: 3px; }
.collapse { margin: auto 8px 4px auto; }

.formula { display: flex; align-items: center; height: 38px; padding: 0 4px 3px; flex: none; }
.sel.cellname { width: 82px; height: 21px; padding: 0 4px; background-position: right 5px center; font-size: 10px; }
.formula .dots { margin: 0 12px 0 11px; }
.fx { display: grid; grid-template-columns: 1fr 1fr 1fr; width: 87px; height: 21px; background: #fff; border: 1px solid #d0d0d0; }
.fxb { font-family: "Liberation Serif", serif; font-size: 13px; font-weight: 700; color: #555; }
.fxb small { font-size: 9px; }
.fbox { flex: 1; display: flex; align-items: center; height: 21px; margin-left: 3px; background: #fff; border: 1px solid #d0d0d0; padding-right: 2px; }
.fbox input { flex: 1; border: 0; background: none; outline: 0; }

.sheet { flex: 1; display: flex; min-height: 0; }
.grid-wrap { position: relative; flex: 1; min-width: 0; overflow: hidden; background: #fff; border-right: 1px solid #ababab; }
.cells { width: calc(100% + 25px); height: calc(100% + 3px); table-layout: fixed; border-collapse: separate; border-spacing: 0; font: 22px/28px Lato, "Open Sans", sans-serif; color: #111; }
.cells th { padding: 1px 0 0; font-weight: 400; background: #e6e6e6; border-right: 1px solid #b8b8b8; border-bottom: 1px solid #c6c6c6; }
.cells thead th { height: 32px; padding: 0; border-bottom-color: #999; border-right-color: #c0c0c0; }
.cells td { padding: 0; border-right: 1px solid #d6d6d6; border-bottom: 1px solid #d6d6d6; }
.cells .corner { width: 46px; }
.cells .corner svg { margin: 2px 2px 0 auto; }
.selection { position: absolute; left: 156px; top: 65px; width: 455px; height: 212px; background: rgba(0, 0, 0, .38); border: 2px solid #000; }
.note { position: absolute; left: 788px; top: 45px; width: 408px; height: 276px; background: #fff; border: 1px solid #b5b5b5; border-right-width: 2px; border-bottom-width: 2px; padding: 9px 16px; color: #111; font: 24px/1.3 Lato, "Open Sans", sans-serif; white-space: nowrap; }
.note p { margin: 0; }
.vscroll { width: 17px; display: flex; flex-direction: column; padding: 0 3px 0 2px; background: #d9d9d9; border-left: 2px solid #e6e6e6; }
.vscroll button { height: 12px; background: #fff; border: 1px solid #bbb; }
.vthumb { flex: 0 1 278px; background: #fff; border: 1px solid #bbb; }

.sheettabs { display: flex; height: 22px; border-top: 1px solid #ababab; border-bottom: 1px solid #cfcfcf; font-size: 10px; padding-right: 17px; flex: none; align-items: flex-start; }
.navs { width: 80px; display: flex; gap: 18px; padding-left: 22px; height: 20px; flex: none; }
.stab { height: 18px; padding: 0 10px 0 12px; color: #555; border-left: 1px solid #8f8f8f; flex: none; }
.stab.first { padding: 0 9px; }
.stab.cur { background: #fff; color: #217346; font-weight: 700; border-bottom: 2px solid #217346; padding: 0 9px; height: 20px; }
.stab.cur + .stab { border-left-color: transparent; }
.add { width: 66px; height: 20px; }
.hzone { display: flex; align-items: center; gap: 11px; height: 21px; }
.hscroll { display: flex; width: 482px; height: 13px; background: #d9d9d9; }
.hscroll button { width: 11px; background: #fff; border: 1px solid #bbb; }
.hthumb { flex: 0 1 353px; background: #fff; border: 1px solid #bbb; margin-right: auto; }

.status { display: flex; align-items: center; height: 18px; background: #f1f1f1; padding: 0 6px; font-size: 9px; flex: none; }
.ready { margin-right: 14px; }
.view { width: 30px; height: 18px; }
.view.on { background: #c9c9c9; }
.zb { width: 12px; height: 14px; }
.zoom { appearance: none; width: 80px; height: 14px; background: linear-gradient(#b0b0b0, #b0b0b0) no-repeat center / 100% 1px; }
.zoom::-webkit-slider-thumb { appearance: none; width: 3px; height: 10px; background: #555; }
.pc { margin-left: 9px; }

.taskbar { display: flex; align-items: center; height: 32px; background: linear-gradient(90deg, #21393d, #20373f 65%, #18283c); color: #fff; font-size: 10px; flex: none; }
.tk { width: 39px; height: 32px; }
.tk.open { background: linear-gradient(#76b9ed, #76b9ed) no-repeat center bottom / 32px 2px; }
.people { margin-right: 87px; }
.weather { display: flex; align-items: center; gap: 7px; }
.tray { display: flex; align-items: center; gap: 7px; margin-left: 13px; }
.clock { display: flex; flex-direction: column; align-items: center; font-size: 9px; line-height: 14px; margin: 0 13px 0 11px; }
.notif { width: 14px; margin-right: 14px; }
.peek { width: 1px; height: 32px; background: #5b6c7c; margin-right: 3px; }
.ink { position: absolute; left: 0; top: 0; pointer-events: none; }
.ink path { stroke-linecap: round; stroke-linejoin: round; }
.pen-red path { fill: none; stroke: #e8201e; stroke-width: 4; }
.pen-red .dark { stroke: #c91f1f; }
.pen-red .fat { stroke-width: 8; }
.pen-green path { fill: none; stroke: #10692c; stroke-width: 4; }
.pen-green .mid { stroke-width: 6; }
.pen-green .blob { stroke-width: 5; fill: #10742c; }
.marker path { fill: none; stroke: #ff1a1a; stroke-opacity: .4; stroke-width: 38; }
```
